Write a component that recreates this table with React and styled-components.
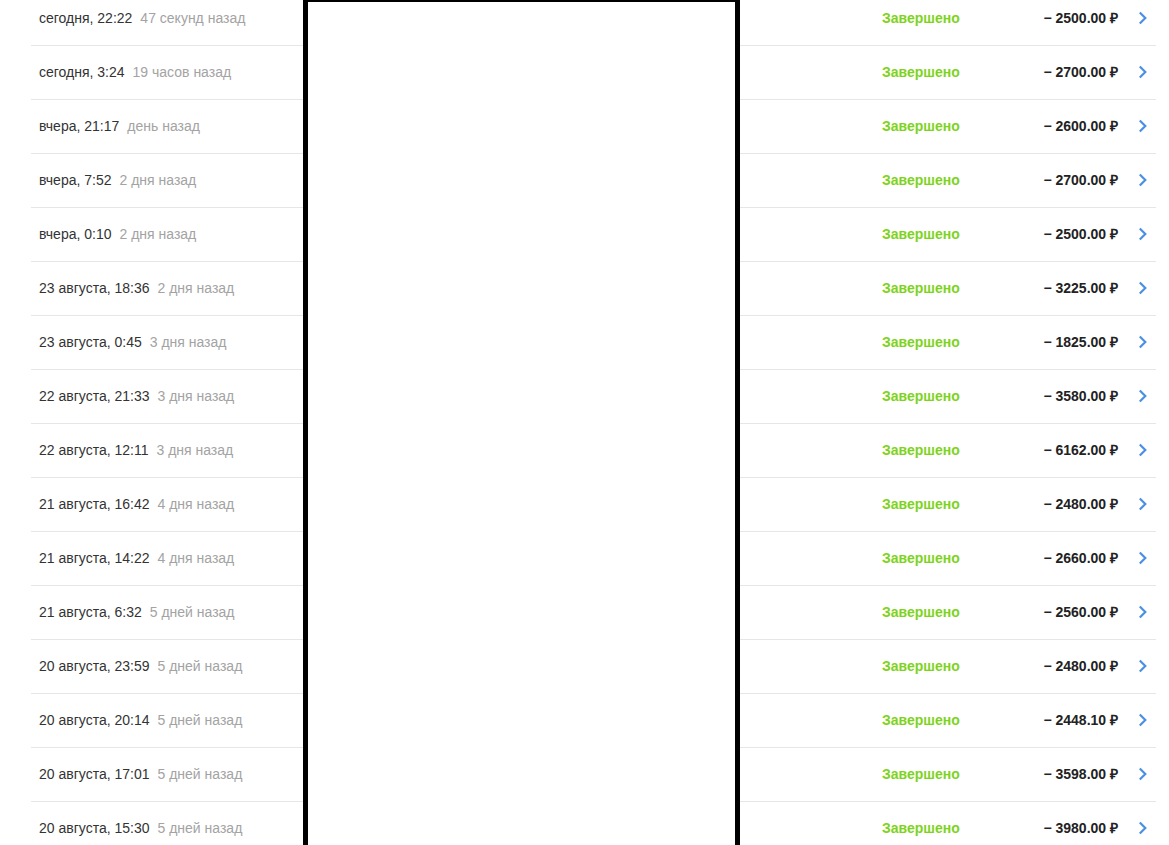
import React from "react";
import styled, { createGlobalStyle } from "styled-components";

const GlobalStyle = createGlobalStyle`
  html, body {
    margin: 0;
    padding: 0;
    overflow: hidden;
    background: #fff;
  }
  body {
    font-family: "Liberation Sans", Arial, sans-serif;
  }
`;

const Page = styled.div`
  position: relative;
  height: 845px;
  overflow: hidden;
  padding: 0 13px 0 31px;
`;

const List = styled.ul`
  list-style: none;
  margin: -8px 0 0;
  padding: 0;
`;

const Row = styled.li`
  display: flex;
  align-items: center;
  height: 51px;
  padding: 0 9px 2px 8px;
  border-bottom: 1px solid #e6e6e6;
  font-size: 14px;
`;

const When = styled.div`
  flex: 1;
  color: #333;
  white-space: nowrap;
`;

const Ago = styled.span`
  margin-left: 8px;
  color: #a3a3a3;
`;

const Status = styled.div`
  width: 118px;
  font-weight: bold;
  color: ${(p) => (p.done ? "#7ed321" : "#e94b3c")};
`;

const Amount = styled.div`
  width: 118px;
  text-align: right;
  font-weight: bold;
  color: #222;
  margin-right: 20px;
`;

const Chevron = styled.svg`
  width: 9px;
  height: 14px;
  display: block;
`;

const Redaction = styled.div`
  position: absolute;
  top: 0;
  bottom: 0;
  left: 303px;
  width: 427px;
  background: #fff;
  border: 5px solid #000;
  border-top-width: 2px;
  border-bottom: none;
`;

const payments = [
  ["сегодня, 22:22", "47 секунд назад", "2500.00"],
  ["сегодня, 3:24", "19 часов назад", "2700.00"],
  ["вчера, 21:17", "день назад", "2600.00"],
  ["вчера, 7:52", "2 дня назад", "2700.00"],
  ["вчера, 0:10", "2 дня назад", "2500.00"],
  ["23 августа, 18:36", "2 дня назад", "3225.00"],
  ["23 августа, 0:45", "3 дня назад", "1825.00"],
  ["22 августа, 21:33", "3 дня назад", "3580.00"],
  ["22 августа, 12:11", "3 дня назад", "6162.00"],
  ["21 августа, 16:42", "4 дня назад", "2480.00"],
  ["21 августа, 14:22", "4 дня назад", "2660.00"],
  ["21 августа, 6:32", "5 дней назад", "2560.00"],
  ["20 августа, 23:59", "5 дней назад", "2480.00"],
  ["20 августа, 20:14", "5 дней назад", "2448.10"],
  ["20 августа, 17:01", "5 дней назад", "3598.00"],
  ["20 августа, 15:30", "5 дней назад", "3980.00"],
];

export default function App() {
  return (
    <>
      <GlobalStyle />
      <Page>
        <List>
          {payments.map(([when, ago, sum], i) => (
            <Row key={i}>
              <When>
                {when}
                <Ago>{ago}</Ago>
              </When>
              <Status done>Завершено</Status>
              <Amount>− {sum} ₽</Amount>
              <Chevron viewBox="0 0 9 14">
                <path d="M1.8 1.5 L7.3 7 L1.8 12.5" fill="none" stroke="#4a90e2" strokeWidth="2.2" />
              </Chevron>
            </Row>
          ))}
        </List>
        <Redaction />
      </Page>
    </>
  );
}
